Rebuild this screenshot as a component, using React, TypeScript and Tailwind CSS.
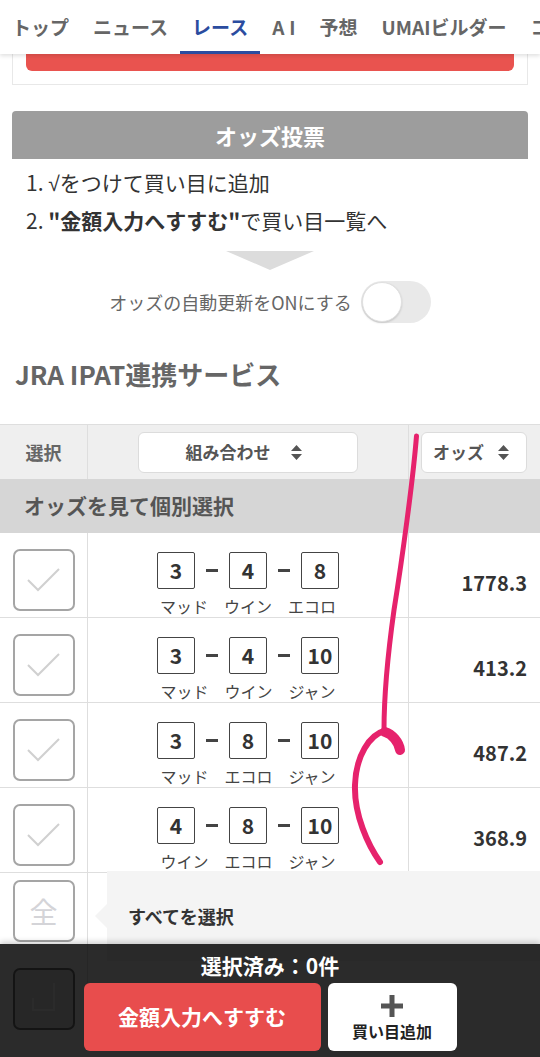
import React from 'react';

const navItems = ['トップ', 'ニュース', 'レース', 'AI', '予想', 'UMAIビルダー', 'コラム'];

const rows = [
  { nums: ['3', '4', '8'], names: ['マッド', 'ウイン', 'エコロ'], odds: '1778.3' },
  { nums: ['3', '4', '10'], names: ['マッド', 'ウイン', 'ジャン'], odds: '413.2' },
  { nums: ['3', '8', '10'], names: ['マッド', 'エコロ', 'ジャン'], odds: '487.2' },
  { nums: ['4', '8', '10'], names: ['ウイン', 'エコロ', 'ジャン'], odds: '368.9' },
];

const SortIcon = () => (
  <svg width="13" height="17" viewBox="0 0 13 17">
    <path d="M6.5 1 L12 7 H1 Z M1 10 H12 L6.5 16 Z" fill="#555" />
  </svg>
);

const CheckBox = ({ children }: { children?: React.ReactNode }) => (
  <div className="w-[62px] h-[62px] rounded-[7px] border-2 border-[#a5a5a5] bg-white flex items-center justify-center">
    {children ?? (
      <svg width="33" height="24" viewBox="0 0 33 24">
        <polyline points="1,12 11,22 32,1" fill="none" stroke="#d0d0d0" strokeWidth="2" />
      </svg>
    )}
  </div>
);

const NumBox = ({ n }: { n: string }) => (
  <div className="w-[38px] h-[37px] border-[1.5px] border-[#444] rounded-[2px] flex items-center justify-center text-[21px] font-bold text-[#333]">
    {n}
  </div>
);

const Dash = () => <div className="w-[12px] h-[3px] bg-[#444] mx-[11px]" />;

export default function App() {
  return (
    <div className="relative w-[540px] h-[1057px] overflow-hidden bg-white font-['Noto_Sans_CJK_JP',sans-serif]">
      {/* top nav */}
      <nav className="relative z-10 h-[54px] flex bg-white whitespace-nowrap overflow-hidden shadow-[0_2px_4px_rgba(0,0,0,0.12)]">
        {navItems.map((item) => (
          <div
            key={item}
            className={
              item === 'レース'
                ? 'h-full flex items-center px-[12px] pt-[3px] border-b-[3px] border-[#2b4c9f] text-[19px] font-bold text-[#2b4c9f]'
                : 'h-full flex items-center px-[12px] text-[19px] font-bold text-[#666]'
            }
          >
            {item === 'AI' ? <span className="tracking-[5px] mr-[-5px]">AI</span> : item}
          </div>
        ))}
      </nav>

      {/* card remainder */}
      <div className="mx-[12px] border border-t-0 border-[#e8e8e8] px-[13px] pb-[13px]">
        <div className="h-[17px] rounded-b-[6px] bg-[#e9534f]" />
      </div>

      {/* odds vote */}
      <div className="mx-[12px] mt-[26px]">
        <div className="h-[48px] rounded-t-[4px] bg-[#9d9d9d] flex items-center justify-center text-[22px] font-bold text-white">
          オッズ投票
        </div>
        <div className="pl-[14px] pt-[5px] text-[21px] leading-[36px] text-[#333]">
          <div>
            1. <span className="font-['Liberation_Sans',sans-serif]">√</span>をつけて買い目に追加
          </div>
          <div>
            2. <span className="font-bold">"金額入力へすすむ"</span>で買い目一覧へ
          </div>
        </div>
        <div className="flex justify-center mt-[13px]">
          <svg width="88" height="19" viewBox="0 0 88 19">
            <polygon points="0,0 88,0 44,19" fill="#dcdcdc" />
          </svg>
        </div>
        <div className="flex items-center justify-center gap-[9px] mt-[11px]">
          <span className="text-[18px] text-[#666]">オッズの自動更新をONにする</span>
          <div className="w-[70px] h-[42px] rounded-full bg-[#e9e9e9] flex items-center p-[1px]">
            <div className="w-[40px] h-[40px] rounded-full bg-white border border-[#e0e0e0] shadow-[0_1px_2px_rgba(0,0,0,0.15)]" />
          </div>
        </div>
      </div>

      <h2 className="mt-[34px] pl-[15px] text-[26px] leading-[34px] font-bold text-[#666]">JRA IPAT連携サービス</h2>

      {/* table */}
      <div className="mt-[33px] border-t border-[#dedede]">
        <div className="grid grid-cols-[88px_321px_131px] h-[54px] bg-[#efefef]">
          <div className="border-r border-[#dedede] flex items-center justify-center text-[18px] font-bold text-[#666]">選択</div>
          <div className="border-r border-[#dedede] flex items-center justify-center">
            <div className="w-[220px] h-[41px] rounded-[6px] border border-[#dcdcdc] bg-white flex items-center justify-center gap-[19px] pr-[8px] text-[17px] font-bold text-[#555]">
              組み合わせ <SortIcon />
            </div>
          </div>
          <div className="flex items-center pl-[12px]">
            <div className="w-[106px] h-[41px] rounded-[6px] border border-[#dcdcdc] bg-white flex items-center gap-[13px] pl-[11px] text-[17px] font-bold text-[#555]">
              オッズ <SortIcon />
            </div>
          </div>
        </div>
        <div className="h-[54px] bg-[#d6d6d6] flex items-center pl-[24px] text-[21px] font-bold text-[#555]">オッズを見て個別選択</div>

        {rows.map((r, i) => (
          <div key={i} className="grid grid-cols-[88px_321px_131px] h-[85px] border-b border-[#dedede]">
            <div className="border-r border-[#dedede] flex justify-center pt-[16px]">
              <CheckBox />
            </div>
            <div className="border-r border-[#dedede] flex flex-col items-center pt-[19px]">
              <div className="flex items-center">
                <NumBox n={r.nums[0]} />
                <Dash />
                <NumBox n={r.nums[1]} />
                <Dash />
                <NumBox n={r.nums[2]} />
              </div>
              <div className="flex gap-[16px] mt-[7px] text-[16px] leading-[20px] text-[#444]">
                {r.names.map((nm, j) => (
                  <span key={j}>{nm}</span>
                ))}
              </div>
            </div>
            <div className="flex items-center justify-end pr-[13px] pt-[16px] text-[20px] font-bold text-[#333]">{r.odds}</div>
          </div>
        ))}

        {/* select all row with tooltip */}
        <div className="relative grid grid-cols-[88px_452px] h-[85px]">
          <div className="border-r border-[#dedede] flex justify-center pt-[7px]">
            <CheckBox>
              <span className="text-[28px] text-[#d4d4d8]">全</span>
            </CheckBox>
          </div>
          <div />
          <div className="absolute left-[107px] right-0 top-[-2px] h-[90px] bg-[#f4f4f4] flex items-center pl-[21px] text-[18px] font-bold text-[#333]">
            <div className="absolute left-[-12px] top-[33px] w-0 h-0 border-y-[12px] border-y-transparent border-r-[12px] border-r-[#f4f4f4]" />
            すべてを選択
          </div>
        </div>
        <div className="grid grid-cols-[88px_452px] h-[90px]">
          <div className="border-r border-[#dedede] flex justify-center pt-[10px]">
            <div className="w-[62px] h-[62px] rounded-[7px] border-2 border-[#777] bg-[#e6e6e6]">
              <svg width="58" height="58" viewBox="0 0 58 58">
                <path d="M39 13 V40 H18 V28" fill="none" stroke="#ffffff" strokeWidth="2" />
              </svg>
            </div>
          </div>
          <div />
        </div>
      </div>

      {/* hand drawn annotation */}
      <svg className="absolute left-0 top-0 pointer-events-none z-20" width="540" height="1057" viewBox="0 0 540 1057">
        <g fill="none" stroke="#e6226c" strokeLinecap="round">
          <path d="M416.5 436 C413 480 402 560 394 610 C387 660 384 700 384 730" strokeWidth="5" />
          <path d="M385 732 C392 734 399 742 400 750" strokeWidth="10" />
          <path d="M384 731 C370 735 356 755 355 785 C354 815 368 845 380 862" strokeWidth="6" />
        </g>
      </svg>

      {/* bottom bar */}
      <div className="absolute left-0 right-0 bottom-0 h-[113px] z-30 bg-black/[0.83] shadow-[0_-2px_6px_rgba(0,0,0,0.2)] flex flex-col items-center pt-[7px]">
        <div className="text-[21px] leading-[28px] font-bold text-white">選択済み：0件</div>
        <div className="flex gap-[7px] mt-[4px]">
          <button className="w-[237px] h-[68px] rounded-[6px] bg-[#e84d4d] text-[21px] font-bold text-white">金額入力へすすむ</button>
          <button className="w-[129px] h-[68px] rounded-[6px] bg-white flex flex-col items-center justify-center gap-[4px]">
            <svg width="24" height="24" viewBox="0 0 24 24">
              <path d="M12 1 V23 M1 12 H23" stroke="#555" strokeWidth="5" />
            </svg>
            <span className="text-[16px] leading-[18px] font-bold text-[#222]">買い目追加</span>
          </button>
        </div>
      </div>
    </div>
  );
}
